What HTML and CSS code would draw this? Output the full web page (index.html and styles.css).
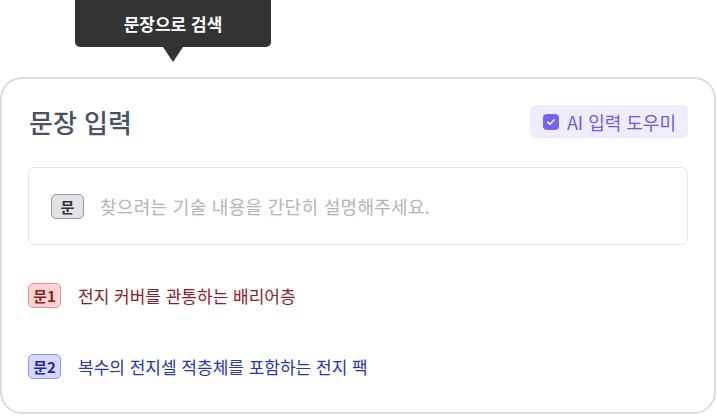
FILE: index.html
```html
<!DOCTYPE html>
<html lang="ko">
<head>
  <meta charset="UTF-8">
  <title>문장 입력</title>
  <link rel="stylesheet" href="styles.css">
</head>
<body>

<div class="tooltip">문장으로 검색</div>

<div class="card">
  <div class="card-head">
    <h2 class="title">문장 입력</h2>
    <label class="ai-chip">
      <span class="check">
        <svg width="10" height="10" viewBox="0 0 10 10"><path d="M1.8 5.2 L4 7.2 L8.2 2.8" fill="none" stroke="#fff" stroke-width="1.6" stroke-linecap="round" stroke-linejoin="round"/></svg>
      </span>
      AI 입력 도우미
    </label>
  </div>

  <div class="input-box">
    <span class="tag tag-gray">문</span>
    <span class="placeholder">찾으려는 기술 내용을 간단히 설명해주세요.</span>
  </div>

  <div class="row">
    <span class="tag tag-red">문1</span>
    <span class="row-text red">전지 커버를 관통하는 배리어층</span>
  </div>
  <div class="row">
    <span class="tag tag-blue">문2</span>
    <span class="row-text blue">복수의 전지셀 적층체를 포함하는 전지 팩</span>
  </div>
</div>

</body>
</html>
```

FILE: styles.css
```css
body {
  margin: 0;
  font-family: "Noto Sans CJK KR", "Noto Sans", sans-serif;
  background: #fff;
}
.tooltip {
  position: relative;
  margin-left: 75px;
  width: 196px;
  height: 47px;
  box-sizing: border-box;
  background: #333333;
  border-radius: 0 0 5px 5px;
  color: #fff;
  font-size: 17px;
  font-weight: 700;
  display: flex;
  align-items: center;
  justify-content: center;
  padding-bottom: 1px;
}
.tooltip::after {
  content: "";
  position: absolute;
  left: 88px;
  top: 47px;
  border-left: 10px solid transparent;
  border-right: 10px solid transparent;
  border-top: 15px solid #333333;
}
.card {
  margin-top: 30px;
  width: 716px;
  height: 337px;
  box-sizing: border-box;
  border: 2px solid #dcdcdc;
  border-radius: 22px;
  padding: 26px 26px 0 26px;
}
.card-head {
  display: flex;
  justify-content: space-between;
  align-items: center;
  height: 33px;
}
.title {
  margin: 0 0 0 1px;
  font-size: 26px;
  font-weight: 500;
  color: #4a5068;
}
.ai-chip {
  display: flex;
  align-items: center;
  gap: 8px;
  height: 33px;
  padding: 0 12px 0 13px;
  background: #efedfd;
  border-radius: 6px;
  color: #6d5ae6;
  font-size: 18px;
}
.check {
  width: 16px;
  height: 16px;
  border-radius: 4px;
  background: #7763f0;
  display: flex;
  align-items: center;
  justify-content: center;
}
.input-box {
  margin-top: 29px;
  height: 78px;
  box-sizing: border-box;
  border: 1px solid #e6e6e6;
  border-radius: 6px;
  display: flex;
  align-items: center;
  padding-left: 22px;
  gap: 16px;
}
.tag {
  display: inline-flex;
  align-items: center;
  justify-content: center;
  width: 33px;
  height: 25px;
  box-sizing: border-box;
  border-radius: 5px;
  font-size: 15px;
  font-weight: 700;
}
.tag-gray {
  background: #e2e2e6;
  border: 1px solid #9a9a9e;
  color: #333;
}
.placeholder {
  font-size: 18px;
  letter-spacing: 0.3px;
  color: #b4b4b4;
}
.row {
  display: flex;
  align-items: center;
  gap: 17px;
  margin-top: 38px;
}
.row + .row {
  margin-top: 46px;
}
.tag-red {
  background: #ffd3d3;
  border: 1px solid #f28b8b;
  color: #8a1f1f;
}
.tag-blue {
  background: #d5d8ff;
  border: 1px solid #8d93ef;
  color: #23289a;
}
.row-text {
  font-size: 17px;
}
.red {
  color: #8c1c2c;
}
.blue {
  color: #2b34b8;
}
```
